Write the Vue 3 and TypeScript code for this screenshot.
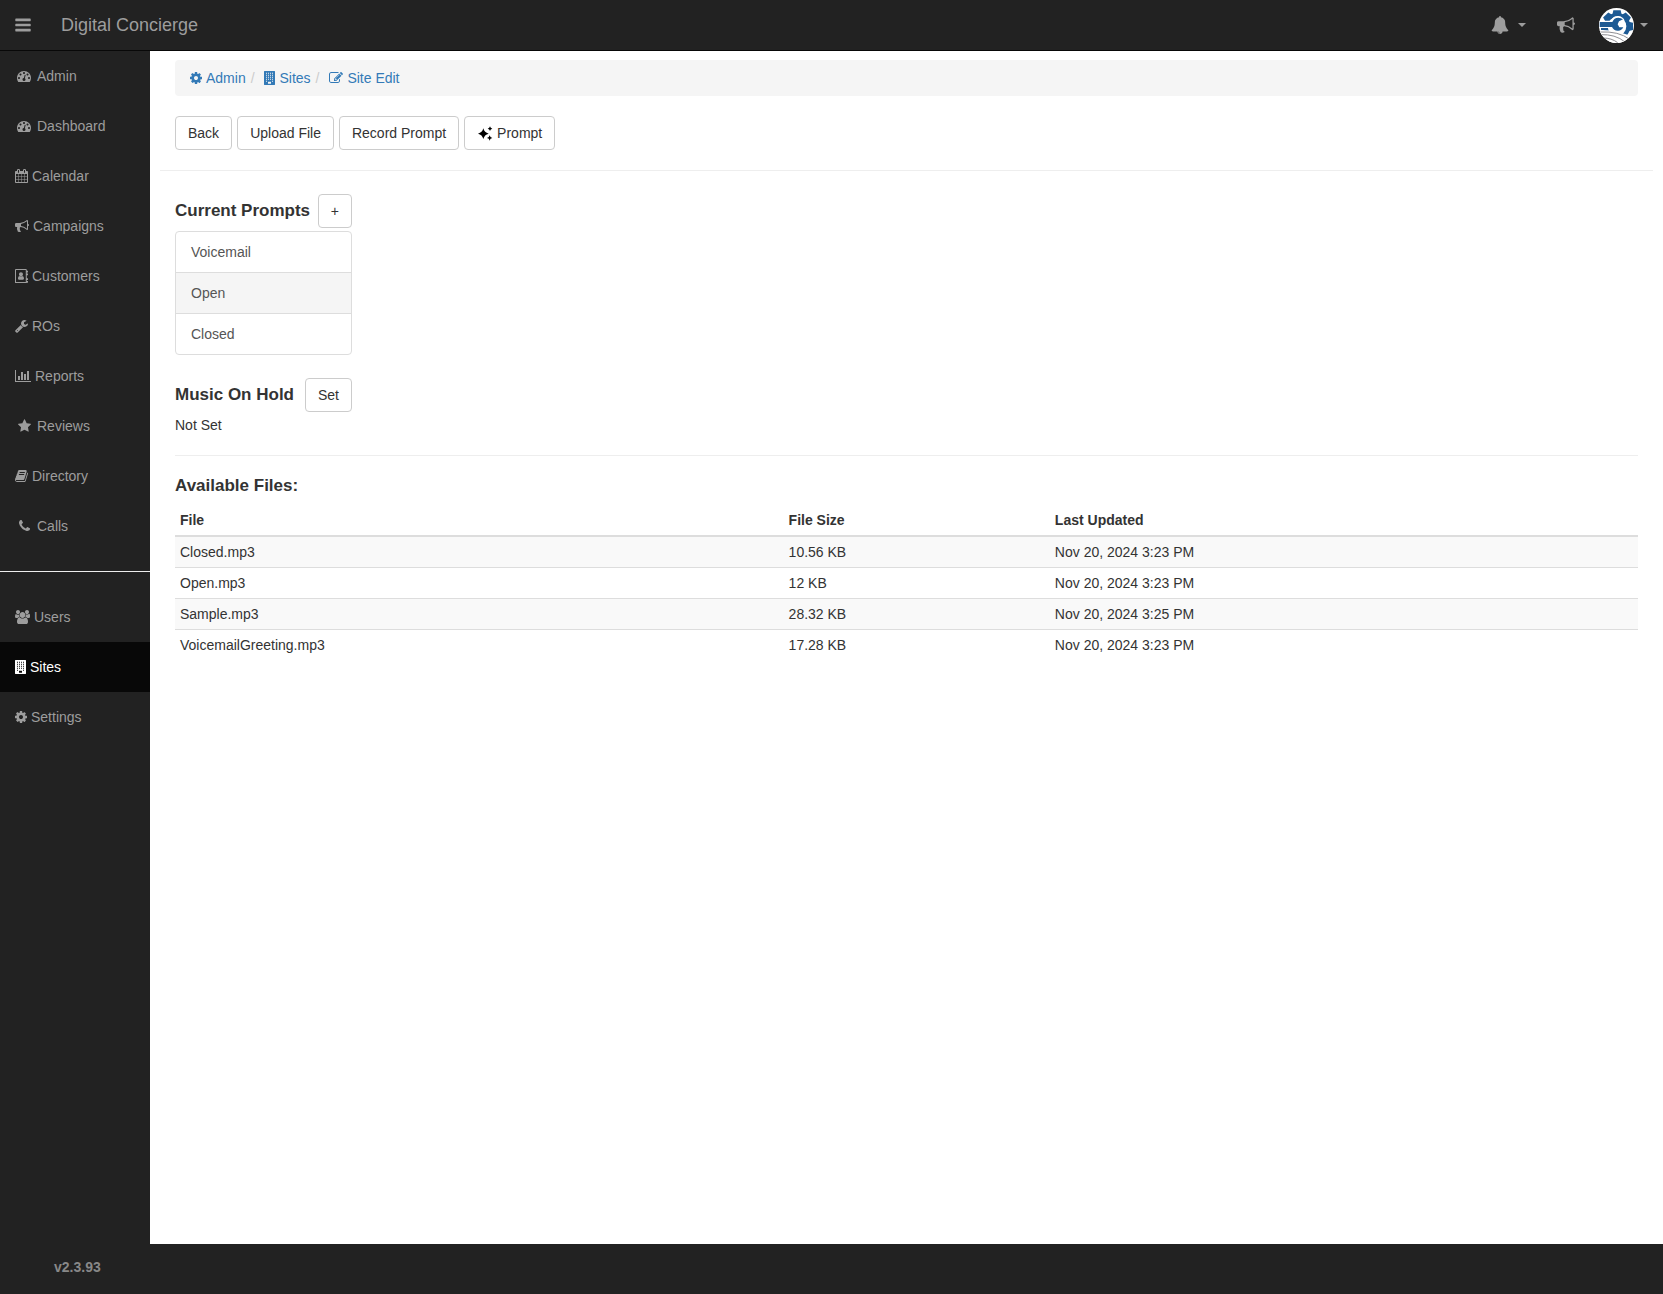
<script setup lang="ts">
import { ref } from 'vue'

interface Icon {
  box: string
  width: number
  path: string
}

interface NavItem {
  label: string
  icon: string
  fixed?: boolean
}

interface AudioFile {
  name: string
  size: string
  updated: string
}

const icons: Record<string, Icon> = {
  bars: {
    box: '128 0 1536 1792',
    width: 16,
    path: 'M1664 1344v128q0 26-19 45t-45 19h-1408q-26 0-45-19t-19-45v-128q0-26 19-45t45-19h1408q26 0 45 19t19 45zm0-512v128q0 26-19 45t-45 19h-1408q-26 0-45-19t-19-45v-128q0-26 19-45t45-19h1408q26 0 45 19t19 45zm0-512v128q0 26-19 45t-45 19h-1408q-26 0-45-19t-19-45v-128q0-26 19-45t45-19h1408q26 0 45 19t19 45z',
  },
  gauge: {
    box: '0 0 1792 1792',
    width: 14,
    path: 'M384 1152q0-53-37.5-90.5t-90.5-37.5-90.5 37.5-37.5 90.5 37.5 90.5 90.5 37.5 90.5-37.5 37.5-90.5zm192-448q0-53-37.5-90.5t-90.5-37.5-90.5 37.5-37.5 90.5 37.5 90.5 90.5 37.5 90.5-37.5 37.5-90.5zm428 481l101-382q6-26-7.5-48.5t-38.5-29.5-48 6.5-30 39.5l-101 382q-60 5-107 43.5t-63 98.5q-20 77 20 146t117 89 146-20 89-117q16-60-6-117t-72-91zm660-33q0-53-37.5-90.5t-90.5-37.5-90.5 37.5-37.5 90.5 37.5 90.5 90.5 37.5 90.5-37.5 37.5-90.5zm-640-640q0-53-37.5-90.5t-90.5-37.5-90.5 37.5-37.5 90.5 37.5 90.5 90.5 37.5 90.5-37.5 37.5-90.5zm448 192q0-53-37.5-90.5t-90.5-37.5-90.5 37.5-37.5 90.5 37.5 90.5 90.5 37.5 90.5-37.5 37.5-90.5zm320 448q0 261-141 483-19 29-54 29h-1402q-35 0-54-29-141-221-141-483 0-182 71-348t191-286 286-191 348-71 348 71 286 191 191 286 71 348z',
  },
  calendar: {
    box: '64 0 1664 1792',
    width: 13,
    path: 'M192 1664h288v-288h-288v288zm352 0h320v-288h-320v288zm-352-352h288v-320h-288v320zm352 0h320v-320h-320v320zm-352-384h288v-288h-288v288zm736 736h320v-288h-320v288zm-384-736h320v-288h-320v288zm768 736h288v-288h-288v288zm-384-352h320v-320h-320v320zm-352-864v-288q0-13-9.5-22.5t-22.5-9.5h-64q-13 0-22.5 9.5t-9.5 22.5v288q0 13 9.5 22.5t22.5 9.5h64q13 0 22.5-9.5t9.5-22.5zm736 864h288v-320h-288v320zm-384-384h320v-288h-320v288zm384 0h288v-288h-288v288zm32-480v-288q0-13-9.5-22.5t-22.5-9.5h-64q-13 0-22.5 9.5t-9.5 22.5v288q0 13 9.5 22.5t22.5 9.5h64q13 0 22.5-9.5t9.5-22.5zm384-64v1280q0 52-38 90t-90 38h-1408q-52 0-90-38t-38-90v-1280q0-52 38-90t90-38h128v-96q0-66 47-113t113-47h64q66 0 113 47t47 113v96h384v-96q0-66 47-113t113-47h64q66 0 113 47t47 113v96h128q52 0 90 38t38 90z',
  },
  bullhorn: {
    box: '0 0 1792 1792',
    width: 14,
    path: 'M1664 640q53 0 90.5 37.5t37.5 90.5-37.5 90.5-90.5 37.5v384q0 52-38 90t-90 38q-417-347-812-380-58 19-91 66t-31 100.5 40 92.5q-20 33-23 65.5t6 58 33.5 55 48 50 61.5 50.5q-29 58-111.5 83t-168.5 11.5-132-55.5q-7-23-29.5-87.5t-32-94.5-23-89-15-101 3.5-98.5 22-110.5h-122q-66 0-113-47t-47-113v-192q0-66 47-113t113-47h480q435 0 896-384 52 0 90 38t38 90v384zm-128 604v-954q-394 302-768 343v270q377 42 768 341z',
  },
  addressBook: {
    box: '0 0 1664 1792',
    width: 13,
    path: 'M128 0h1260q50 0 85 35t35 85v104h156v224h-156v128h156v224h-156v384h156v224h-156v128h156v224h-156v32q0 53-35 90t-85 37H128q-53 0-90-37t-37-91V128q0-54 37-91t90-37zM128 128v1536h1252V128zM764 416q106 0 181 75t75 181-75 181-181 75-181-75-75-181 75-181 181-75zM570 886q88 74 194 74t194-74q190 20 190 340 0 54-33 98t-79 44H492q-46 0-79-44t-33-98q0-320 190-340z',
  },
  wrench: {
    box: '64 0 1664 1792',
    width: 13,
    path: 'M448 1472q0-26-19-45t-45-19-45 19-19 45 19 45 45 19 45-19 19-45zm644-420l-682 682q-37 37-90 37-52 0-91-37l-106-108q-38-36-38-90 0-53 38-91l681-681q39 98 114.5 173.5t173.5 114.5zm634-435q0 39-23 106-47 134-164.5 217.5t-258.5 83.5q-185 0-316.5-131.5t-131.5-316.5 131.5-316.5 316.5-131.5q58 0 121.5 16.5t107.5 46.5q16 11 16 28t-16 28l-293 169v224l193 107q5-3 79-48.5t135.5-81 70.5-35.5q15 0 23.5 10t8.5 25z',
  },
  chart: {
    box: '0 0 2048 1792',
    width: 16,
    path: 'M640 896v512h-256v-512h256zm384-512v1024h-256v-1024h256zm1024 1152v128h-2048v-1536h128v1408h1920zm-640-896v768h-256v-768h256zm384-384v1152h-256v-1152h256z',
  },
  star: {
    box: '64 0 1664 1792',
    width: 13,
    path: 'M1728 647q0 22-26 48l-363 354 86 500q1 7 1 20 0 21-10.5 35.5t-30.5 14.5q-19 0-40-12l-449-236-449 236q-22 12-40 12-21 0-31.5-14.5t-10.5-35.5q0-6 2-20l86-500-364-354q-25-27-25-48 0-37 56-46l502-73 225-455q19-41 49-41t49 41l225 455 502 73q56 9 56 46z',
  },
  book: {
    box: '64 0 1664 1792',
    width: 13,
    path: 'M1703 478q40 57 18 129l-275 906q-19 64-76.5 107.5t-122.5 43.5h-923q-77 0-148.5-53.5t-99.5-131.5q-24-67-2-127 0-4 3-27t4-37q1-8-3-21.5t-3-19.5q2-11 8-21t16.5-23.5 16.5-23.5q23-38 45-91.5t30-91.5q3-10 .5-30t-.5-28q3-11 17-28t17-23q21-36 42-92t25-90q1-9-2.5-32t.5-28q4-13 22-30.5t22-22.5q19-26 42.5-84.5t27.5-96.5q1-8-3-25.5t-2-26.5q2-8 9-18t18-23 17-21q8-12 16.5-30.5t15-35 16-36 19.5-32 26.5-23.5 36-11.5 47.5 5.5l-1 3q38-9 51-9h761q74 0 114 56t18 130l-274 906q-36 119-71.5 153.5t-128.5 34.5h-869q-27 0-38 15-11 16-1 43 24 70 144 70h923q29 0 56-15.5t35-41.5l300-987q7-22 5-57 38 15 59 43zm-1064 2q-4 13 2 22.5t20 9.5h608q13 0 25.5-9.5t16.5-22.5l21-64q4-13-2-22.5t-20-9.5h-608q-13 0-25.5 9.5t-16.5 22.5zm-83 256q-4 13 2 22.5t20 9.5h608q13 0 25.5-9.5t16.5-22.5l21-64q4-13-2-22.5t-20-9.5h-608q-13 0-25.5 9.5t-16.5 22.5z',
  },
  phone: {
    box: '192 0 1408 1792',
    width: 11,
    path: 'M1600 1240q0 27-10 70.5t-21 68.5q-21 50-122 106-94 51-186 51-27 0-53-3.5t-57.5-12.5-47-14.5-55.5-20.5-49-18q-98-35-175-83-127-79-264-216t-216-264q-48-77-83-175-3-9-18-49t-20.5-55.5-14.5-47-12.5-57.5-3.5-53q0-92 51-186 56-101 106-122 25-11 68.5-21t70.5-10q14 0 21 3 18 6 53 76 11 19 30 54t35 63.5 31 53.5q3 4 17.5 25t21.5 35.5 7 28.5q0 20-28.5 50t-62 55-62 53-28.5 46q0 9 5 22.5t8.5 20.5 14 24 11.5 19q76 137 174 235t235 174q2 1 19 11.5t24 14 20.5 8.5 22.5 5q18 0 46-28.5t53-62 55-62 50-28.5q14 0 28.5 7t35.5 21.5 25 17.5q25 15 53.5 31t63.5 35 54 30q70 35 76 53 3 7 3 21z',
  },
  users: {
    box: '-64 0 1920 1792',
    width: 15,
    path: 'M529 896q-162 5-265 128h-134q-82 0-138-40.5t-56-118.5q0-353 124-353 6 0 43.5 21t97.5 42.5 119 21.5q67 0 133-23-5 37-5 66 0 159 93 293zm1071 637q0 120-73 189.5t-194 69.5h-874q-121 0-194-69.5t-73-189.5q0-53 3.5-103.5t14-109 26.5-108.5 43-97.5 62-81 85.5-53.5 111.5-20q10 0 43 21.5t73 48 107 48 135 21.5 135-21.5 107-48 73-48 43-21.5q61 0 111.5 20t85.5 53.5 62 81 43 97.5 26.5 108.5 14 109 3.5 103.5zm-1024-1277q0 106-75 181t-181 75-181-75-75-181 75-181 181-75 181 75 75 181zm704 384q0 159-112.5 271.5t-271.5 112.5-271.5-112.5-112.5-271.5 112.5-271.5 271.5-112.5 271.5 112.5 112.5 271.5zm576 225q0 78-56 118.5t-138 40.5h-134q-103-123-265-128 93-134 93-293 0-29-5-66 66 23 133 23 59 0 119-21.5t97.5-42.5 43.5-21q124 0 124 353zm-128-609q0 106-75 181t-181 75-181-75-75-181 75-181 181-75 181 75 75 181z',
  },
  building: {
    box: '0 0 1408 1792',
    width: 11,
    path:
      'M64 0h1280q26 0 45 19t19 45v1664q0 26-19 45t-45 19H64q-26 0-45-19t-19-45V64q0-26 19-45t45-19zM512 1376v256h384v-256z' +
      [256, 512, 768, 1024, 1280]
        .map((y) => [256, 512, 768, 1024].map((x) => (y === 1280 && (x === 512 || x === 768) ? '' : `M${x} ${y - 32}v128h128v-128z`)).join(''))
        .join(''),
  },
  cog: {
    box: '128 0 1536 1792',
    width: 12,
    path: 'M1152 896q0-106-75-181t-181-75-181 75-75 181 75 181 181 75 181-75 75-181zm512-109v222q0 12-8 23t-20 13l-185 28q-19 54-39 91 35 50 107 138 10 12 10 25t-9 23q-27 37-99 108t-94 71q-12 0-26-9l-138-108q-44 23-91 38-16 136-29 186-7 28-36 28h-222q-14 0-24.5-8.5t-11.5-21.5l-28-184q-49-16-90-37l-141 107q-10 9-25 9-14 0-25-11-126-114-165-168-7-10-7-23 0-12 8-23 15-21 51-66.5t54-70.5q-27-50-41-99l-183-27q-13-2-21-12.5t-8-23.5v-222q0-12 8-23t19-13l186-28q14-46 39-92-40-57-107-138-10-12-10-24 0-10 9-23 26-36 98.5-107.5t94.5-71.5q13 0 26 10l138 107q44-23 91-38 16-136 29-186 7-28 36-28h222q14 0 24.5 8.5t11.5 21.5l28 184q49 16 90 37l142-107q9-9 24-9 13 0 25 10 129 119 165 170 7 8 7 22 0 12-8 23-15 21-51 66.5t-54 70.5q26 50 41 98l183 28q13 2 21 12.5t8 23.5z',
  },
  edit: {
    box: '0 0 1792 1792',
    width: 14,
    path: 'M888 1184l116-116-152-152-116 116v56h96v96h56zm440-720q-16-16-33 1l-350 350q-17 17-1 33t33-1l350-350q17-17 1-33zm80 594v190q0 119-84.5 203.5t-203.5 84.5h-832q-119 0-203.5-84.5t-84.5-203.5v-832q0-119 84.5-203.5t203.5-84.5h832q63 0 117 25 15 7 18 23 3 17-9 29l-49 49q-14 14-32 8-23-6-45-6h-832q-66 0-113 47t-47 113v832q0 66 47 113t113 47h832q66 0 113-47t47-113v-126q0-13 9-22l64-64q15-15 35-7t20 29zm-96-738l288 288-672 672h-288v-288zm444 132l-92 92-288-288 92-92q28-28 68-28t68 28l152 152q28 28 28 68t-28 68z',
  },
  bell: {
    box: '0 0 1792 1792',
    width: 18,
    path: 'M912 1696q0-16-16-16-59 0-101.5-42.5t-42.5-101.5q0-16-16-16t-16 16q0 73 51.5 124.5t124.5 51.5q16 0 16-16zm816-288q0 52-38 90t-90 38h-448q0 106-75 181t-181 75-181-75-75-181h-448q-52 0-90-38t-38-90q50-42 91-88t85-119.5 74.5-158.5 50-206 19.5-260q0-152 117-282.5t307-158.5q-8-19-8-39 0-40 28-68t68-28 68 28 28 68q0 20-8 39 190 28 307 158.5t117 282.5q0 139 19.5 260t50 206 74.5 158.5 85 119.5 91 88z',
  },
}

const mainNav: NavItem[] = [
  { label: 'Admin', icon: 'gauge', fixed: true },
  { label: 'Dashboard', icon: 'gauge', fixed: true },
  { label: 'Calendar', icon: 'calendar' },
  { label: 'Campaigns', icon: 'bullhorn' },
  { label: 'Customers', icon: 'addressBook' },
  { label: 'ROs', icon: 'wrench' },
  { label: 'Reports', icon: 'chart' },
  { label: 'Reviews', icon: 'star', fixed: true },
  { label: 'Directory', icon: 'book' },
  { label: 'Calls', icon: 'phone', fixed: true },
]

const adminNav: NavItem[] = [
  { label: 'Users', icon: 'users' },
  { label: 'Sites', icon: 'building' },
  { label: 'Settings', icon: 'cog' },
]

const crumbs: NavItem[] = [
  { label: 'Admin', icon: 'cog' },
  { label: 'Sites', icon: 'building' },
  { label: 'Site Edit', icon: 'edit' },
]

const prompts = ['Voicemail', 'Open', 'Closed']
const selectedPrompt = ref('Open')

const files: AudioFile[] = [
  { name: 'Closed.mp3', size: '10.56 KB', updated: 'Nov 20, 2024 3:23 PM' },
  { name: 'Open.mp3', size: '12 KB', updated: 'Nov 20, 2024 3:23 PM' },
  { name: 'Sample.mp3', size: '28.32 KB', updated: 'Nov 20, 2024 3:25 PM' },
  { name: 'VoicemailGreeting.mp3', size: '17.28 KB', updated: 'Nov 20, 2024 3:23 PM' },
]
</script>

<template>
  <div class="page">
    <header class="topbar">
      <button class="icon-btn menu" type="button" aria-label="Toggle menu">
        <svg class="icon big" :viewBox="icons.bars.box" width="16"><path :d="icons.bars.path" /></svg>
      </button>
      <a class="brand" href="#">Digital Concierge</a>
      <div class="tools">
        <button class="icon-btn" type="button" aria-label="Notifications">
          <svg class="icon big" :viewBox="icons.bell.box" width="18"><path :d="icons.bell.path" /></svg>
          <span class="caret spaced"></span>
        </button>
        <button class="icon-btn announce" type="button" aria-label="Announcements">
          <svg class="icon big" :viewBox="icons.bullhorn.box" width="18"><path :d="icons.bullhorn.path" /></svg>
        </button>
        <button class="icon-btn account" type="button" aria-label="Account">
          <svg class="avatar" viewBox="0 0 105 105">
            <defs>
              <clipPath id="avatar-clip"><circle cx="52.5" cy="52.5" r="52.5" /></clipPath>
            </defs>
            <g clip-path="url(#avatar-clip)">
              <rect width="105" height="105" fill="#fff" />
              <circle cx="54" cy="55" r="34" fill="none" stroke="#1d5a94" stroke-width="12" />
              <path v-for="a in [-90, -45, 0, 45, 90]" :key="a" :transform="`rotate(${a} 54 55)`" d="M40 20l3-13h22l3 13z" fill="#1d5a94" />
              <path d="M0 38h36q5-15 22-14 12 1 18 12v26q-6 11-18 12-14 0-21-14H0z" fill="#fff" />
              <path d="M2 42h38q5-13 18-13 8 0 14 5L60 40l-4 9 5 9h12q-6 11-17 10-12 0-17-11H2z" fill="#1d5a94" />
              <path d="M0 66q60-2 105 24v15H0z" fill="#fff" />
              <path d="M4 72q55-3 88 22M4 80q45-2 74 22M12 90q26 0 44 14" fill="none" stroke="#8e8e93" stroke-width="3" />
            </g>
          </svg>
          <span class="caret"></span>
        </button>
      </div>
    </header>

    <div class="body">
      <nav class="sidebar" aria-label="Main">
        <a v-for="item in mainNav" :key="item.label" class="nav-link" href="#">
          <span class="glyph" :class="{ fixed: item.fixed }">
            <svg class="icon" :viewBox="icons[item.icon].box" :width="icons[item.icon].width" fill-rule="evenodd"><path :d="icons[item.icon].path" /></svg>
          </span>{{ item.label }}
        </a>
        <hr class="nav-rule" />
        <a v-for="item in adminNav" :key="item.label" class="nav-link" :class="{ active: item.label === 'Sites' }" href="#">
          <span class="glyph">
            <svg class="icon" :viewBox="icons[item.icon].box" :width="icons[item.icon].width" fill-rule="evenodd"><path :d="icons[item.icon].path" /></svg>
          </span>{{ item.label }}
        </a>
      </nav>

      <main class="content">
        <ol class="breadcrumb">
          <li v-for="c in crumbs" :key="c.label">
            <a href="#">
              <svg class="icon" :viewBox="icons[c.icon].box" :width="icons[c.icon].width" fill-rule="evenodd"><path :d="icons[c.icon].path" /></svg>{{ c.label }}
            </a>
          </li>
        </ol>

        <div class="actions">
          <button class="btn" type="button">Back</button>
          <button class="btn" type="button">Upload File</button>
          <button class="btn" type="button">Record Prompt</button>
          <button class="btn" type="button">
            <svg class="sparkle" viewBox="0 0 48 48" width="16" height="16">
              <path d="M19 10q3 13 16 16-13 3-16 16-3-13-16-16 13-3 16-16zM39 4q1 6 7 7-6 1-7 7-1-6-7-7 6-1 7-7zM38 31q1 7 8 8-7 1-8 8-1-7-8-8 7-1 8-8z" />
            </svg>Prompt
          </button>
        </div>
        <hr class="rule wide" />

        <section class="prompts">
          <div class="section-head">
            <h4>Current Prompts</h4>
            <button class="btn" type="button" aria-label="Add prompt">+</button>
          </div>
          <div class="list">
            <a v-for="p in prompts" :key="p" href="#" :class="{ selected: p === selectedPrompt }" @click.prevent="selectedPrompt = p">{{ p }}</a>
          </div>
        </section>

        <section class="prompts">
          <div class="section-head">
            <h4>Music On Hold</h4>
            <button class="btn" type="button">Set</button>
          </div>
          <p>Not Set</p>
        </section>
        <hr class="rule" />

        <h4>Available Files:</h4>
        <table>
          <thead>
            <tr><th class="col-file">File</th><th class="col-size">File Size</th><th>Last Updated</th></tr>
          </thead>
          <tbody>
            <tr v-for="f in files" :key="f.name">
              <td>{{ f.name }}</td>
              <td>{{ f.size }}</td>
              <td>{{ f.updated }}</td>
            </tr>
          </tbody>
        </table>
      </main>
    </div>

    <footer class="footer">v2.3.93</footer>
  </div>
</template>

<style>
body {
  margin: 0;
  background: #222;
}
</style>

<style scoped>
.page {
  display: flex;
  flex-direction: column;
  min-height: 100vh;
  background: #222;
  color: #333;
  font: 14px/20px "Liberation Sans", Arial, sans-serif;
}
.page * {
  box-sizing: border-box;
}
a {
  text-decoration: none;
}
.icon {
  display: block;
  flex: none;
  height: 14px;
  fill: currentColor;
}
.icon.big {
  height: 18px;
}

.topbar {
  display: flex;
  align-items: center;
  height: 51px;
  border-bottom: 1px solid #080808;
  color: #9d9d9d;
}
.icon-btn {
  display: flex;
  align-items: center;
  height: 50px;
  padding: 0 15px;
  border: 0;
  background: none;
  color: inherit;
  font: inherit;
}
.brand {
  padding: 15px;
  color: #9d9d9d;
  font-size: 18px;
}
.tools {
  display: flex;
  margin-left: auto;
}
.announce {
  padding: 0 9px 0 16px;
}
.account {
  gap: 6px;
}
.caret {
  border: 4px solid transparent;
  border-top-color: currentColor;
  border-bottom: 0;
}
.caret.spaced {
  margin-left: 9px;
}
.avatar {
  width: 35px;
  height: 35px;
}

.body {
  display: flex;
  flex: 1;
}
.sidebar {
  flex: none;
  width: 150px;
}
.nav-link {
  display: flex;
  align-items: center;
  padding: 15px;
  color: #9d9d9d;
}
.nav-link.active {
  background: #080808;
  color: #fff;
}
.glyph {
  display: flex;
  justify-content: center;
  margin-right: 4px;
}
.glyph.fixed {
  width: 18px;
}
.nav-rule {
  height: 1px;
  margin: 20px 0;
  border: 0;
  background: #eee;
}

.content {
  flex: 1;
  padding: 9px 25px 20px;
  background: #fff;
}
.breadcrumb {
  display: flex;
  margin: 0 0 20px;
  padding: 8px 15px;
  border-radius: 4px;
  background: #f5f5f5;
  list-style: none;
}
.breadcrumb li {
  display: flex;
}
.breadcrumb li + li::before {
  padding: 0 6px 0 5px;
  color: #ccc;
  content: "/\00a0";
}
.breadcrumb a {
  display: flex;
  align-items: center;
  gap: 4px;
  color: #337ab7;
}
.actions {
  display: flex;
  gap: 5px;
}
.btn {
  display: flex;
  align-items: center;
  gap: 4px;
  padding: 6px 12px;
  border: 1px solid #ccc;
  border-radius: 4px;
  background: #fff;
  color: #333;
  font: inherit;
}
.sparkle {
  fill: #000;
}
.rule {
  height: 1px;
  margin: 20px 0;
  border: 0;
  background: #eee;
}
.rule.wide {
  margin: 20px -15px 0;
}
h4 {
  margin: 0;
  font-size: 17px;
  font-weight: bold;
  line-height: 20px;
}
.prompts {
  width: 177px;
  margin-top: 23px;
}
.section-head {
  display: flex;
  align-items: center;
  justify-content: space-between;
  margin-bottom: 3px;
}
.list {
  overflow: hidden;
  border: 1px solid #ddd;
  border-radius: 4px;
}
.list a {
  display: block;
  padding: 10px 15px;
  color: #555;
}
.list a + a {
  border-top: 1px solid #ddd;
}
.list a.selected {
  background: #f5f5f5;
}
p {
  margin: 0;
}
table {
  width: 100%;
  margin-top: 9px;
  border-collapse: collapse;
}
th,
td {
  padding: 5px;
  border-top: 1px solid #ddd;
  text-align: left;
}
th {
  border-top: 0;
  border-bottom: 2px solid #ddd;
}
.col-file {
  width: 41.6%;
}
.col-size {
  width: 18.2%;
}
tbody tr:nth-child(odd) {
  background: #f9f9f9;
}

.footer {
  padding: 13px 54px 17px;
  color: #888;
  font-weight: bold;
}
</style>
